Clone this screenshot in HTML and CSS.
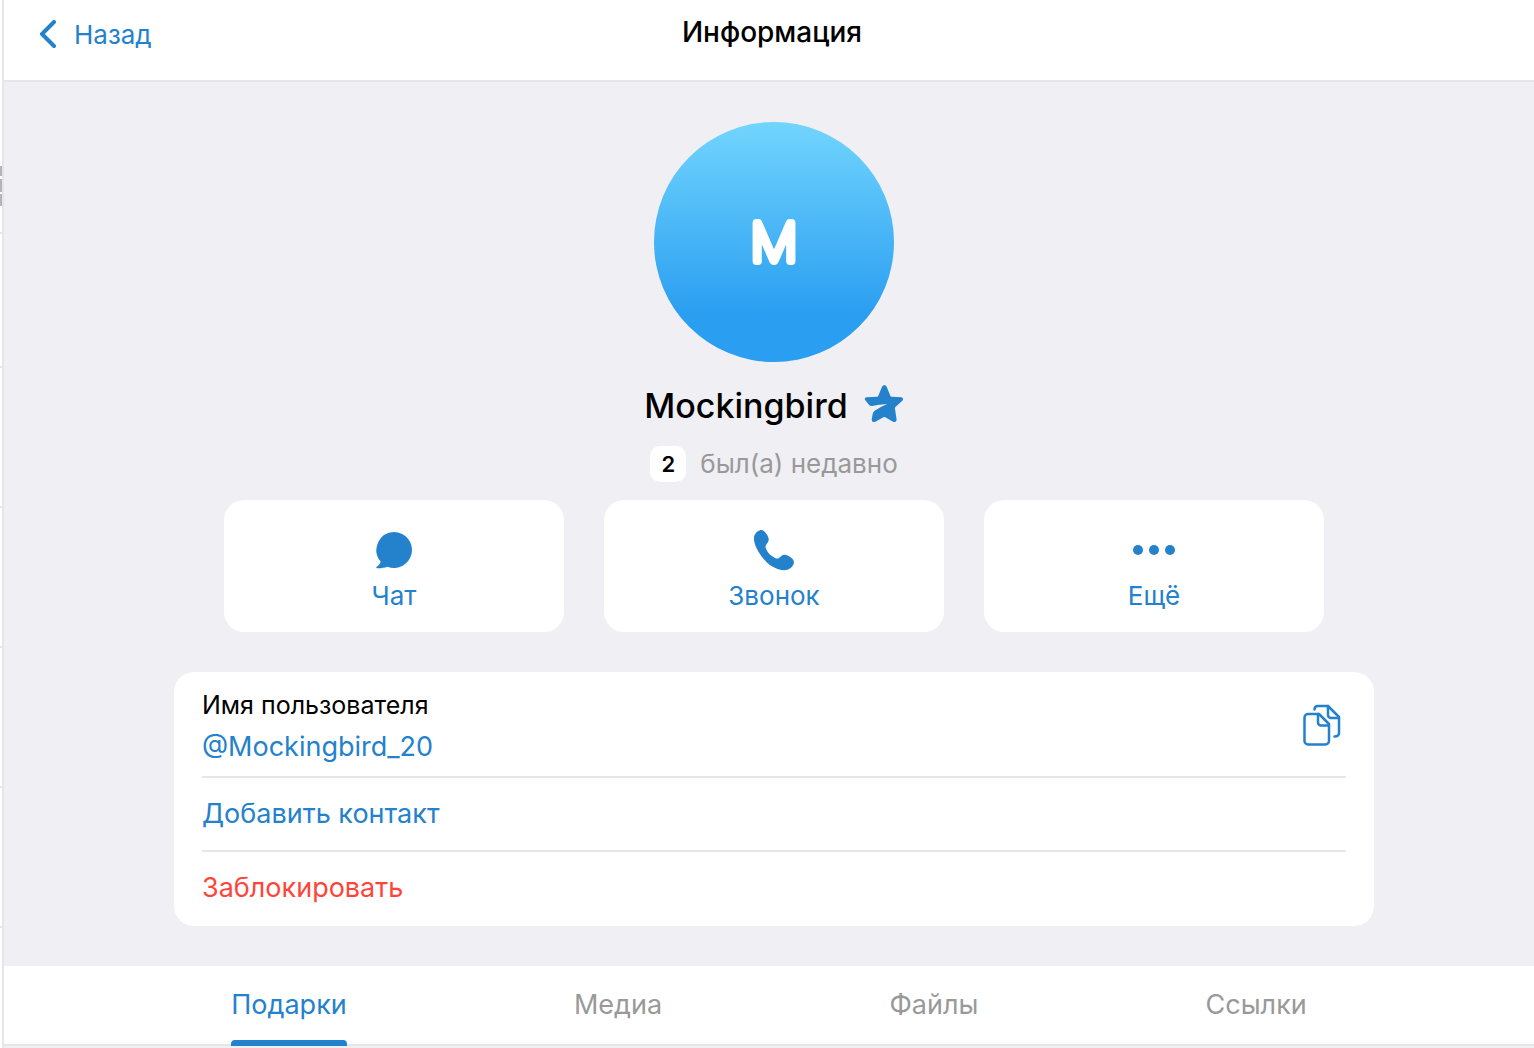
FILE: index.html
```html
<!DOCTYPE html>
<html lang="ru">
<head>
    <meta charset="UTF-8">
    <meta name="viewport" content="width=device-width, initial-scale=1.0">
    <title>Информация</title>
    <link rel="stylesheet" href="styles.css">
</head>
<body>
    <!-- Edge of the chat list -->
    <aside class="chat-list"></aside>

    <div class="page">
        <header class="header">
            <button type="button" class="back">
                <svg width="20" height="30" viewBox="0 0 20 30" fill="none" stroke="currentColor" stroke-width="4" stroke-linecap="round" stroke-linejoin="round">
                    <path d="M16 2L4 14l12 12" />
                </svg>
                Назад
            </button>
            <h1 class="title">Информация</h1>
        </header>

        <main class="profile">
            <div class="avatar">
                <svg width="80" height="80" viewBox="0 0 80 80">
                    <text class="avatar-letter" x="40" y="59">M</text>
                </svg>
            </div>

            <h2 class="name">
                Mockingbird
                <svg class="star" width="40" height="40" viewBox="708 41 120 120" fill="currentColor">
                    <path d="M762 49Q769 39 776 49L787 76Q788 79 791 79L820 81Q829 84 823 91L803 109Q800 112 801 116L806 148Q804 158 795 154L772 141Q769 139 766 141L742 154Q732 158 731 148L734 131Q735 125 740 121Q756 110 778 101Q752 102 732 107Q725 108 721 101L712 90Q707 82 716 81L747 79Q750 79 751 76Z" />
                </svg>
            </h2>

            <p class="status">
                <span class="level">2</span>
                был(а) недавно
            </p>

            <div class="actions">
                <button type="button" class="action">
                    <svg width="44" height="44" viewBox="0 0 44 44" fill="currentColor">
                        <path d="M22 4a18 18 0 1 1-6.500 34.800C12 40 8 40.500 5 40.200c-1-.2-1-1.200 0-1.700 2-1.200 3.200-2.800 3.600-5A18 18 0 0 1 22 4z" />
                    </svg>
                    Чат
                </button>
                <button type="button" class="action">
                    <svg width="44" height="44" viewBox="0 0 44 44" fill="currentColor">
                        <path d="M8 2.200c3-.8 5.500 1.600 7.200 4.800 1.800 3.300 2.200 5.300.2 8-1.500 2-2.500 3-1.500 5.500 1.800 4.500 5.600 8 9.600 9.700 2.500 1 3.500-.4 5.500-2 2.500-2 5-1.600 8 .1 3 1.700 5.600 4 4.800 6.900-1 4-5 7-9.500 7-8 0-16.500-5.500-22.500-13.500C4.500 21.500 1.500 14.500 2 9.500c.3-3.500 3-6.500 6-7.300z" />
                    </svg>
                    Звонок
                </button>
                <button type="button" class="action">
                    <svg width="44" height="44" viewBox="0 0 44 44" fill="currentColor">
                        <circle cx="6" cy="22" r="5" />
                        <circle cx="22" cy="22" r="5" />
                        <circle cx="38" cy="22" r="5" />
                    </svg>
                    Ещё
                </button>
            </div>

            <section class="card">
                <div class="row user-row">
                    <div class="user">
                        <span class="label">Имя пользователя</span>
                        <a href="#" class="username">@Mockingbird_20</a>
                    </div>
                    <button type="button" class="copy" aria-label="Копировать">
                        <svg width="40" height="44" viewBox="0 0 40 44" fill="none" stroke="currentColor" stroke-width="2.500" stroke-linecap="round" stroke-linejoin="round">
                            <path d="M6 10h11l10 10v17a3.500 3.500 0 0 1-3.500 3.500H6A3.500 3.500 0 0 1 2.500 37V13.500A3.500 3.500 0 0 1 6 10z" />
                            <path d="M16 10v8.500a3 3 0 0 0 3 3h8" />
                            <path d="M12.500 5.500c0-2.200 1.300-3.500 3.500-3.500h10l11 11v16c0 2.500-1.300 3.500-4.500 3.500" />
                            <path d="M26 2v9a3 3 0 0 0 3 3h8" />
                        </svg>
                    </button>
                </div>
                <button type="button" class="row">Добавить контакт</button>
                <button type="button" class="row danger">Заблокировать</button>
            </section>
        </main>

        <nav class="tabs">
            <a href="#" class="tab active">Подарки</a>
            <a href="#" class="tab">Медиа</a>
            <a href="#" class="tab">Файлы</a>
            <a href="#" class="tab">Ссылки</a>
        </nav>
    </div>
</body>
</html>
```
FILE: styles.css
```css
/* General */
* {
    box-sizing: border-box;
}

body {
    margin: 0;
    display: flex;
    min-height: 100vh;
    font-family: Inter, "Liberation Sans", sans-serif;
    font-size: 27px;
    line-height: 32px;
    color: #000;
    background-color: #efeff4;
}

button {
    padding: 0;
    border: none;
    background: none;
    font: inherit;
    color: #2481cc;
    cursor: pointer;
}

a {
    color: #2481cc;
    text-decoration: none;
}

svg {
    display: block;
}

/* Edge of the chat list */
.chat-list {
    flex: none;
    width: 4px;
    border-right: 2px solid #e6e6e8;
    background:
        linear-gradient(#b4b4b8, #b4b4b8) 0 166px / 2px 10px no-repeat,
        linear-gradient(#b4b4b8, #b4b4b8) 0 179px / 2px 13px no-repeat,
        linear-gradient(#b4b4b8, #b4b4b8) 0 194px / 2px 12px no-repeat,
        linear-gradient(#e6e6e8, #e6e6e8) 0 232px / 2px 2px no-repeat,
        linear-gradient(#fff, #fff) 0 0 / 2px 360px no-repeat,
        repeating-linear-gradient(#fff 0 86px, #e6e6e8 86px 88px, #fff 88px 140px);
}

.page {
    flex: 1;
    min-width: 0;
}

/* Header */
.header {
    display: grid;
    grid-template-columns: 1fr auto 1fr;
    align-items: start;
    height: 82px;
    padding: 16px 28px 0 34px;
    border-bottom: 2px solid #e6e6e8;
    background-color: #fff;
}

.back {
    display: flex;
    align-items: center;
    gap: 16px;
    padding-top: 3px;
    font-size: 26px;
}

.title {
    margin: 0;
    font-size: 28px;
    font-weight: 500;
}

/* Profile */
.profile {
    display: flex;
    flex-direction: column;
    align-items: center;
    padding: 40px 20px 40px 30px;
}

.avatar {
    display: flex;
    align-items: center;
    justify-content: center;
    width: 240px;
    height: 240px;
    border-radius: 50%;
    background: linear-gradient(#72d5fd, #2a9ef1 80%);
}

.avatar-letter {
    font-size: 52px;
    font-weight: 100;
    text-anchor: middle;
    fill: #fff;
    stroke: #fff;
    stroke-width: 8px;
    stroke-linejoin: round;
}

.name {
    display: flex;
    align-items: center;
    gap: 16px;
    margin: 22px 0 0;
    font-size: 34px;
    font-weight: 500;
    line-height: 44px;
}

.star {
    margin-bottom: 4px;
    color: #2481cc;
}

.status {
    display: flex;
    align-items: center;
    gap: 14px;
    margin: 18px 0;
    font-size: 26px;
    line-height: 36px;
    color: #999;
}

.level {
    width: 36px;
    border-radius: 10px;
    background-color: #fff;
    font-size: 22px;
    font-weight: 600;
    text-align: center;
    color: #000;
}

.actions {
    display: flex;
    gap: 40px;
    width: 100%;
    max-width: 1100px;
}

.action {
    display: flex;
    flex: 1;
    flex-direction: column;
    align-items: center;
    gap: 8px;
    padding: 28px 0 20px;
    border-radius: 20px;
    background-color: #fff;
    font-size: 26px;
}

/* Info card */
.card {
    width: 100%;
    max-width: 1200px;
    margin-top: 40px;
    padding: 0 28px;
    border-radius: 20px;
    background-color: #fff;
}

.row {
    display: block;
    width: 100%;
    padding: 20px 0;
    text-align: left;
}

.row + .row {
    border-top: 2px solid #e6e6e8;
}

.user-row {
    display: flex;
    align-items: center;
    justify-content: space-between;
    padding: 17px 4px 13px 0;
}

.user {
    display: flex;
    flex-direction: column;
    gap: 10px;
}

.label {
    font-size: 25px;
}

.danger {
    padding-bottom: 22px;
    color: #ff453a;
}

/* Tabs */
.tabs {
    display: flex;
    justify-content: space-evenly;
    height: 80px;
    border-bottom: 2px solid #e6e6e8;
    background-color: #fff;
}

.tab {
    position: relative;
    height: 80px;
    padding-top: 23px;
    color: #999;
}

.active {
    color: #2481cc;
}

.active::after {
    content: "";
    position: absolute;
    left: 0;
    right: 0;
    bottom: 0;
    height: 6px;
    border-radius: 4px 4px 0 0;
    background-color: #2481cc;
}
```
